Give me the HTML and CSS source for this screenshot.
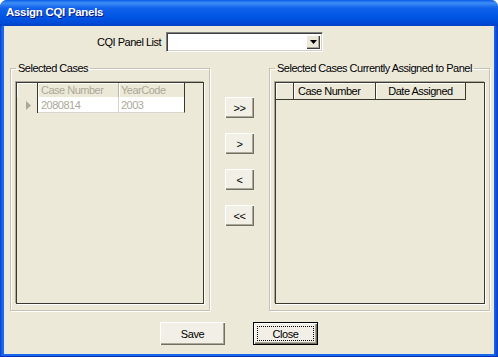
FILE: index.html
```html
<!DOCTYPE html>
<html lang="en">
<head>
    <meta charset="UTF-8">
    <title>Assign CQI Panels</title>
    <link rel="stylesheet" href="styles.css">
</head>
<body>

<div class="window">
    <div class="titlebar">Assign CQI Panels</div>

    <div class="client">
        <div class="panel-row">
            <label class="field-label" for="panel-list">CQI Panel List</label>
            <div class="combo" id="panel-list">
                <div class="combo-text"></div>
                <div class="combo-btn">
                    <svg width="7" height="4" viewBox="0 0 7 4"><path d="M0 0h7L3.5 4z" fill="#000"/></svg>
                </div>
            </div>
        </div>

        <div class="main-row">
            <fieldset class="group group-left">
                <legend>Selected Cases</legend>
                <div class="grid">
                    <div class="grid-row grid-head disabled">
                        <div class="cell rowhead"></div>
                        <div class="cell col-case">Case Number</div>
                        <div class="cell col-year">YearCode</div>
                    </div>
                    <div class="grid-row grid-data disabled">
                        <div class="cell rowhead">
                            <svg width="5" height="9" viewBox="0 0 5 9"><path d="M0 0l5 4.5L0 9z" fill="#aca899"/></svg>
                        </div>
                        <div class="cell col-case">2080814</div>
                        <div class="cell col-year">2003</div>
                    </div>
                </div>
            </fieldset>

            <div class="move-buttons">
                <button class="btn btn-move">&gt;&gt;</button>
                <button class="btn btn-move">&gt;</button>
                <button class="btn btn-move">&lt;</button>
                <button class="btn btn-move">&lt;&lt;</button>
            </div>

            <fieldset class="group group-right">
                <legend>Selected Cases Currently Assigned to Panel</legend>
                <div class="grid">
                    <div class="grid-row grid-head">
                        <div class="cell rowhead"></div>
                        <div class="cell col-number">Case Number</div>
                        <div class="cell col-date">Date Assigned</div>
                    </div>
                </div>
            </fieldset>
        </div>

        <div class="bottom-row">
            <button class="btn btn-wide">Save</button>
            <button class="btn btn-wide btn-default">Close</button>
        </div>
    </div>
</div>

</body>
</html>
```

FILE: styles.css
```css
* {
    box-sizing: border-box;
}

body {
    margin: 0;
    background-color: #ffffff;
    font-family: "Liberation Sans", Arial, sans-serif;
    font-size: 11px;
    letter-spacing: -0.5px;
    color: #000000;
}

.window {
    width: 498px;
    height: 357px;
    display: flex;
    flex-direction: column;
    padding: 0 4px 3px 4px;
    border-radius: 7px 7px 0 0;
    overflow: hidden;
    background: linear-gradient(to right, #0a3bc8 0, #1768ee 2px, #1768ee 494px, #0a3bc8 498px);
    box-shadow: inset 0 -1px 0 #0831b8;
}

.titlebar {
    height: 26px;
    margin: 0 -4px;
    padding: 6px 0 0 6px;
    color: #ffffff;
    font-size: 11.5px;
    font-weight: bold;
    letter-spacing: -0.3px;
    text-shadow: 1px 1px 0 #0a1883;
    background: linear-gradient(to bottom, #0a5cea 0, #3d8ff6 3px, #1262ea 8px, #0057e5 16px, #004bd8 23px, #003fc2 26px);
}

.client {
    flex: 1;
    background-color: #ece9d8;
}

/* panel list combo */
.panel-row {
    display: flex;
    align-items: center;
    gap: 5px;
    padding: 6px 0 0 96px;
    height: 26px;
}

.field-label {
    width: 61px;
    display: flex;
    justify-content: flex-end;
    white-space: nowrap;
}

.combo {
    width: 157px;
    height: 20px;
    display: flex;
    background-color: #ffffff;
    border: 1px solid;
    border-color: #808080 #ffffff #ffffff #808080;
    box-shadow: inset 1px 1px 0 #404040, inset -1px -1px 0 #d4d0c8;
    padding: 2px;
}

.combo-text {
    flex: 1;
}

.combo-btn {
    width: 14px;
    display: flex;
    align-items: center;
    justify-content: center;
    background-color: #ece9d8;
    box-shadow: inset 1px 1px 0 #ffffff, inset -1px -1px 0 #404040, inset -2px -2px 0 #aca899;
}

/* groups and grids */
.main-row {
    display: flex;
    align-items: flex-start;
    gap: 15px;
    margin-top: 10px;
    padding-left: 6px;
}

.group {
    margin: 0;
    padding: 0 0 6px 5px;
    border: 1px solid #c5c2b2;
    box-shadow: inset 1px 1px 0 #ffffff, 1px 1px 0 #ffffff;
}

.group legend {
    margin-left: 0;
    padding: 0 2px;
    line-height: 13px;
    white-space: nowrap;
}

.group-left {
    width: 200px;
}

.group-right {
    width: 221px;
}

.grid {
    height: 222px;
    margin-top: 7px;
    border: 1px solid #3a3930;
    box-shadow: -1px -1px 0 #aca899, 1px 1px 0 #ffffff;
    background-color: #ece9d8;
}

.group-left .grid {
    width: 188px;
}

.group-right .grid {
    width: 210px;
}

.grid-row {
    display: flex;
}

.cell {
    display: flex;
    align-items: center;
    white-space: nowrap;
    border-right: 1px solid #3a3930;
}

.grid-head .cell {
    box-shadow: inset 1px 1px 0 #ffffff;
}

.disabled .cell {
    color: #aca899;
}

.group-left .grid-head {
    height: 14px;
}

.group-left .grid-data {
    height: 16px;
}

.group-left .rowhead {
    width: 21px;
    justify-content: center;
    padding-left: 2px;
}

.group-left .col-case {
    width: 81px;
    padding-left: 3px;
    border-right-color: #b9b6a6;
}

.group-left .col-year {
    width: 66px;
    padding-left: 2px;
}

.grid-data .col-case,
.grid-data .col-year {
    background-color: #ffffff;
    border-bottom: 1px solid #d8d6cc;
}

.grid-data .col-case {
    border-right-color: #d8d6cc;
}

.group-right .grid-head {
    height: 17px;
}

.group-right .grid-head .cell {
    border-bottom: 1px solid #3a3930;
}

.group-right .rowhead {
    width: 18px;
}

.group-right .col-number {
    width: 82px;
    padding-left: 4px;
}

.group-right .col-date {
    width: 90px;
    justify-content: center;
}

/* buttons */
.btn {
    font-family: "Liberation Sans", Arial, sans-serif;
    font-size: 11px;
    letter-spacing: -0.4px;
    color: #000000;
    padding: 0;
    border: none;
    background-color: #f1efe6;
    box-shadow: inset 1px 1px 0 #ffffff, inset -1px -1px 0 #716f64, inset -2px -2px 0 #aca899;
    cursor: pointer;
}

.move-buttons {
    display: flex;
    flex-direction: column;
    gap: 15px;
    padding-top: 35px;
}

.btn-move {
    width: 29px;
    height: 21px;
}

.bottom-row {
    display: flex;
    gap: 28px;
    margin-top: 11px;
    padding-left: 156px;
}

.btn-wide {
    width: 65px;
    height: 23px;
}

.btn-default {
    border: 1px solid #000000;
    outline: 1px dotted #000000;
    outline-offset: -5px;
}
```
